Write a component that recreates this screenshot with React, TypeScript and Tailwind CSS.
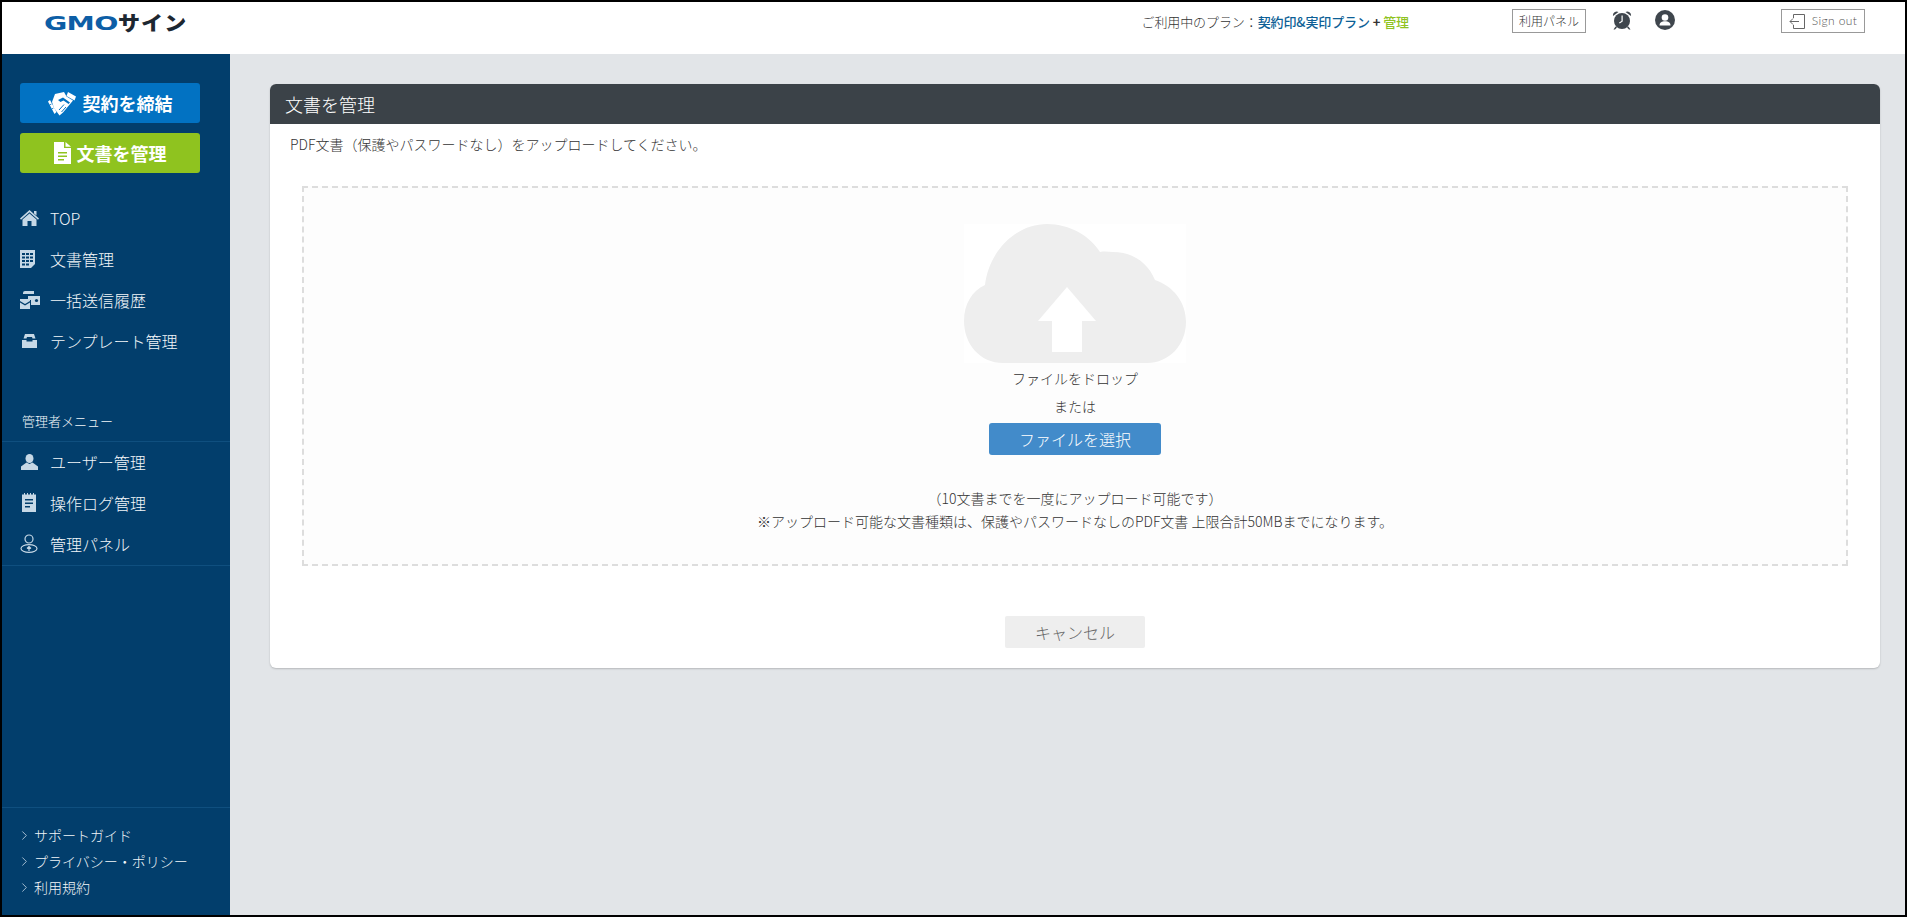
import { ChevronRight } from 'lucide-react';

const font = "font-['Noto_Sans_CJK_JP','Noto_Sans',sans-serif]";

const HandshakeIcon = () => (
  <svg viewBox="0 0 29 25" className="w-[29px] h-[25px]" fill="#fff">
    <path d="M20 1l8 4.500-1.500 4-8-4.500z" />
    <path d="M7 3l9-2 2.500 4.500L25 9.500 15 21.500l-3.500 3L6 17 4 11z" />
    <path d="M10 9l5-2.500 7 5-1.500 1.500-5-3.500-3 1.500z" fill="#0272c2" />
    <path d="M11 19l5-5.500M13.500 21l4.500-5" stroke="#0272c2" strokeWidth="1" />
    <path d="M0 10.500l2-1.500 6.500 12L6.500 23z" />
    <path d="M1.500 14l2-1M3.500 18l2-1" stroke="#0272c2" strokeWidth="0.800" />
  </svg>
);

const FileIcon = () => (
  <svg viewBox="0 0 17 22" className="w-[17px] h-[22px]" fill="#fff">
    <path d="M0 0h10v6h7v16H0z" />
    <path d="M11.500 0L17 4.800h-5.500z" />
    <path d="M4 10h9v1.500H4zM4 13.500h9V15H4zM4 17h6v1.500H4z" fill="#8fc31f" />
  </svg>
);

const HomeIcon = () => (
  <svg viewBox="0 0 19 16" className="w-[19px] h-[16px]" fill="#c6d8e6">
    <path d="M9.500 0L19 8.500l-1 1.200-8.500-7.500L1 9.700 0 8.500z" />
    <path d="M14 1h2.500v4.500L14 3.500z" />
    <path d="M9.500 3.500L16.500 9.500V16H11.500V11h-4v5H2.500V9.500z" />
  </svg>
);

const TableDocIcon = () => (
  <svg viewBox="0 0 15 18" className="w-[15px] h-[18px]" fill="#c6d8e6">
    <path d="M0 0h15v14l-4 4H0z" />
    <path
      d="M2 3h3v2H2zM6 3h3v2H6zM10 3h3v2h-3zM2 6.500h3v2H2zM6 6.500h3v2H6zM10 6.500h3v2h-3zM2 10h3v2H2zM6 10h3v2H6zM10 10h3v2h-3zM2 13.500h3v2H2zM6 13.500h3v2H6z"
      fill="#023e6c"
    />
  </svg>
);

const MailStackIcon = () => (
  <svg viewBox="0 0 20 18" className="w-[20px] h-[18px]" fill="#c6d8e6">
    <path d="M5 0h9v3H3V2a2 2 0 0 1 2-2z" />
    <path d="M8 5h12v9H11V9H8z" />
    <circle cx="16.500" cy="9.500" r="1.600" fill="#023e6c" />
    <path d="M0 8h10v2L5 13 0 10z" />
    <path d="M0 11.500l5 3 5-3V18H0z" />
  </svg>
);

const InboxIcon = () => (
  <svg viewBox="0 0 15 14" className="w-[15px] h-[14px] ml-[2px]" fill="#c6d8e6">
    <path d="M3 0h9l1.500 4.500H10.500L10 3H5l-.5 1.500H1.500z" />
    <path d="M0 6h4.500v1.500h6V6H15v8H0z" />
  </svg>
);

const UserIcon = () => (
  <svg viewBox="0 0 17 16" className="w-[17px] h-[16px] ml-[1px]" fill="#c6d8e6">
    <ellipse cx="8.500" cy="4.500" rx="4" ry="4.500" />
    <path d="M5.500 8.500l3 1.500 3-1.500L17 12.500V16H0v-3.500z" />
  </svg>
);

const LogIcon = () => (
  <svg viewBox="0 0 14 19" className="w-[14px] h-[19px] ml-[2px]" fill="#c6d8e6">
    <path d="M0 1.500h14V19H0z" />
    <path d="M2 0h1v3H2zM5 0h1v3H5zM8 0h1v3H8zM11 0h1v3h-1z" />
    <path d="M3 6h8v1.500H3zM3 9.500h8V11H3zM3 13h5v1.500H3z" fill="#023e6c" />
  </svg>
);

const PanelIcon = () => (
  <svg viewBox="0 0 18 19" className="w-[18px] h-[19px]" fill="none" stroke="#c6d8e6" strokeWidth="1.200">
    <circle cx="9" cy="5" r="4" />
    <ellipse cx="9" cy="14.500" rx="8" ry="3.800" />
    <path d="M9 17v-4M7 14.500l2-2 2 2" />
  </svg>
);

const AlarmIcon = () => (
  <svg viewBox="0 0 20 19" className="w-[20px] h-[19px]" fill="#3f464d">
    <path d="M1 5A3.800 3.800 0 0 1 6.500 1zM19 5a3.800 3.800 0 0 0-5.500-4z" />
    <circle cx="10" cy="10" r="8" />
    <path d="M9.500 4.500h1.200v6l-3 2-.7-1 2.500-1.600z" fill="#fff" />
    <path d="M3.500 15.500l-2 3h1.500l2-2zM16.500 15.500l2 3H17l-2-2z" />
  </svg>
);

const UserCircleIcon = () => (
  <svg viewBox="0 0 20 20" className="w-[20px] h-[20px]" fill="#3f464d">
    <circle cx="10" cy="10" r="10" />
    <circle cx="10" cy="7.500" r="3.300" fill="#fff" />
    <path d="M4.500 15.500c0-3 2.500-4.300 5.500-4.300s5.500 1.300 5.500 4.300z" fill="#fff" />
  </svg>
);

const SignOutIcon = () => (
  <svg viewBox="0 0 16 15" className="w-[16px] h-[15px]" fill="none" stroke="#666" strokeWidth="1">
    <path d="M4.500 4V.5h11v14h-11V11" />
    <path d="M10 7.500H1M4 4.500l-3 3 3 3" />
  </svg>
);

const CloudIcon = () => (
  <svg viewBox="0 0 222 139" className="w-[222px] h-[139px] bg-white">
    <path
      d="M39 139C16 139 0 120 0 97C0 80 8 67 21 61C25 27 52 0 83 0C106 0 126 12 136 28C141 27 145 28 149 28C169 28 184 39 191 56C209 62 222 78 222 98C222 121 205 139 183 139Z"
      fill="#eeeeee"
    />
    <path d="M103 63L74 97H88V128H118V97H132Z" fill="#fff" />
  </svg>
);

const NavItem = ({ icon, label }: { icon: React.ReactNode; label: string }) => (
  <a className="flex items-center h-[41px] pl-[18px] text-[16px] text-[#f2f6f9]">
    <span className="flex items-center w-[30px] shrink-0">{icon}</span>
    {label}
  </a>
);

const FooterLink = ({ label }: { label: string }) => (
  <a className="flex items-center h-[26px] pl-[15px] text-[14px] text-[#f2f6f9]">
    <ChevronRight size={15} strokeWidth={1.300} className="text-[#c6d8e6] mr-[2px]" />
    {label}
  </a>
);

const Sidebar = () => (
  <aside className="w-[228px] shrink-0 bg-[#023e6c] flex flex-col">
    <div className="pl-[18px] pr-[30px] pt-[29px] flex flex-col gap-[10px]">
      <button className="h-[40px] rounded-[3px] bg-[#0272c2] text-white text-[18px] font-bold flex items-center justify-center gap-[6px]">
        <HandshakeIcon />
        契約を締結
      </button>
      <button className="h-[40px] rounded-[3px] bg-[#8fc31f] text-white text-[18px] font-bold flex items-center justify-center gap-[6px]">
        <FileIcon />
        文書を管理
      </button>
    </div>

    <nav className="mt-[24px]">
      <NavItem icon={<HomeIcon />} label="TOP" />
      <NavItem icon={<TableDocIcon />} label="文書管理" />
      <NavItem icon={<MailStackIcon />} label="一括送信履歴" />
      <NavItem icon={<InboxIcon />} label="テンプレート管理" />
    </nav>

    <div className="mt-[40px] pl-[20px] h-[41px] flex items-center text-[13px] text-[#f2f6f9] border-b border-[#0f4f7f]">
      管理者メニュー
    </div>
    <nav className="-mt-[1px] border-b border-[#0f4f7f] pb-[1px]">
      <NavItem icon={<UserIcon />} label="ユーザー管理" />
      <NavItem icon={<LogIcon />} label="操作ログ管理" />
      <NavItem icon={<PanelIcon />} label="管理パネル" />
    </nav>

    <div className="mt-auto border-t border-[#0f4f7f] pt-[14px] pb-[15px]">
      <FooterLink label="サポートガイド" />
      <FooterLink label="プライバシー・ポリシー" />
      <FooterLink label="利用規約" />
    </div>
  </aside>
);

const Header = () => (
  <header className="h-[52px] shrink-0 bg-white flex items-start">
    <div className="pl-[42px] pt-[11px] flex items-center leading-none">
      <span className="inline-block origin-left scale-x-[1.42] font-['DejaVu_Sans',sans-serif] font-bold text-[20px] text-[#0d5ea6] tracking-[-0.5px]">
        GMO
      </span>
      <span className="inline-block origin-left scale-x-[1.1] font-black text-[20px] text-[#1d2731] ml-[22px] tracking-[1px]">
        サイン
      </span>
    </div>
    <div className="ml-auto flex items-center h-[40px]">
      <span className="text-[13px] text-[#333] tracking-[-0.1px]">
        ご利用中のプラン：
        <span className="text-[#0d5f96] font-medium">契約印&amp;実印プラン</span>
        <span className="font-bold"> + </span>
        <span className="text-[#8fc31f] font-medium">管理</span>
      </span>
      <a className="ml-[103px] w-[74px] h-[24px] -mt-[2px] border border-[#999] flex items-center justify-center text-[12px] text-[#333]">
        利用パネル
      </a>
      <span className="ml-[26px] -mt-[4px] flex">
        <AlarmIcon />
      </span>
      <span className="ml-[23px] -mt-[4px] flex">
        <UserCircleIcon />
      </span>
      <a className="ml-[106px] mr-[40px] w-[84px] h-[24px] -mt-[2px] border border-[#999] flex items-center justify-center gap-[7px] text-[12px] text-[#555] tracking-[0.4px] font-['Lato',sans-serif]">
        <SignOutIcon />
        Sign out
      </a>
    </div>
  </header>
);

const UploadCard = () => (
  <section className="ml-[40px] mr-[25px] mt-[30px] h-[584px] bg-white rounded-[6px] shadow-[0_1px_2px_rgba(0,0,0,0.2)] flex flex-col">
    <h1 className="h-[40px] shrink-0 bg-[#3b4248] rounded-t-[6px] pl-[15px] flex items-center text-[18px] font-light text-white">
      文書を管理
    </h1>
    <p className="pl-[20px] mt-[10px] h-[21px] text-[14px] leading-[21px] text-[#333]">
      PDF文書（保護やパスワードなし）をアップロードしてください。
    </p>
    <div className="mx-[32px] mt-[31px] h-[380px] border-2 border-dashed border-[#ddd] bg-[#fdfdfd] flex flex-col items-center text-[14px] text-[#333]">
      <div className="mt-[36px]">
        <CloudIcon />
      </div>
      <p className="mt-[4px] h-[22px] leading-[22px]">ファイルをドロップ</p>
      <p className="mt-[6px] h-[22px] leading-[22px]">または</p>
      <button className="mt-[6px] w-[172px] h-[32px] rounded-[3px] bg-[#428bca] text-white text-[16px] font-light">
        ファイルを選択
      </button>
      <p className="mt-[32px] h-[23px] leading-[23px]">（10文書までを一度にアップロード可能です）</p>
      <p className="h-[23px] leading-[23px]">
        ※アップロード可能な文書種類は、保護やパスワードなしのPDF文書 上限合計50MBまでになります。
      </p>
    </div>
    <div className="flex justify-center mt-[50px]">
      <button className="w-[140px] h-[32px] rounded-[2px] bg-[#eeeeee] text-[16px] text-[#666] font-light">
        キャンセル
      </button>
    </div>
  </section>
);

export default function App() {
  return (
    <div className={`h-screen w-full border-2 border-black flex flex-col overflow-hidden font-light ${font}`}>
      <Header />
      <div className="flex flex-1 min-h-0">
        <Sidebar />
        <main className="flex-1 bg-[#e2e5e8]">
          <UploadCard />
        </main>
      </div>
    </div>
  );
}
